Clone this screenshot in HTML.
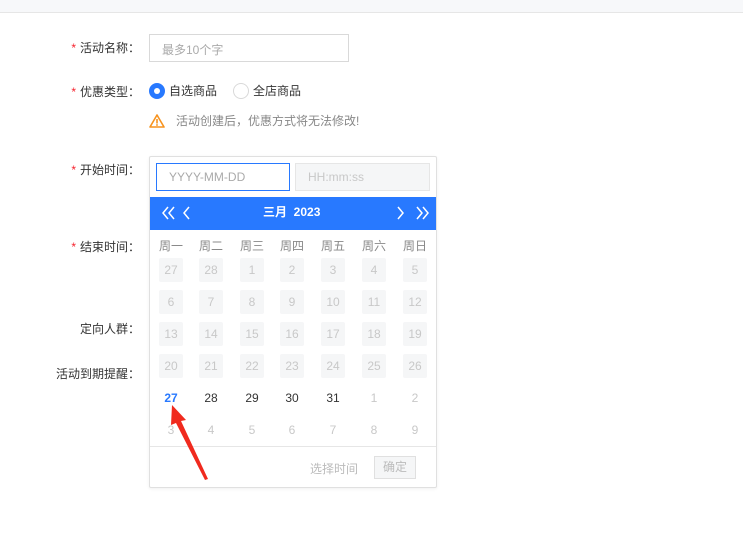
<!DOCTYPE html>
<html><head><meta charset="utf-8"><style>
*{margin:0;padding:0;box-sizing:border-box}
body{width:743px;height:544px;background:#fff;font-family:"Liberation Sans","Noto Sans CJK SC",sans-serif;position:relative;overflow:hidden;font-size:12px;color:#333}
.a{position:absolute}
.lbl{position:absolute;font-size:12px;color:#333;text-align:right;width:106px}
.lbl b{color:#f5222d;font-weight:normal;margin-right:4px}
.c{position:absolute;width:24px;height:24px;line-height:24px;text-align:center;font-size:12px;font-family:"Liberation Sans",sans-serif}
.g{background:#f5f6f7;color:#c8c8c8;border-radius:2px}
.w{position:absolute;top:237px;width:30px;text-align:center;color:#888;font-size:12px}
</style></head><body>
<div class="a" style="left:0;top:0;width:743px;height:13px;background:#f7f8fa;border-bottom:1px solid #e6e6e6"></div>
<div class="lbl" style="left:34px;top:39px"><b>*</b>活动名称：</div>
<div class="a" style="left:149px;top:34px;width:200px;height:28px;border:1px solid #d9d9d9;color:#aaa;padding:6px 12px">最多10个字</div>
<div class="lbl" style="left:34px;top:83px"><b>*</b>优惠类型：</div>
<div class="a" style="left:149px;top:83px;width:16px;height:16px;border-radius:50%;background:#2879ff"><div class="a" style="left:5px;top:5px;width:6px;height:6px;border-radius:50%;background:#fff"></div></div>
<div class="a" style="left:169px;top:82px">自选商品</div>
<div class="a" style="left:233px;top:83px;width:16px;height:16px;border-radius:50%;border:1px solid #d9d9d9"></div>
<div class="a" style="left:253px;top:82px">全店商品</div>
<svg class="a" style="left:149px;top:113px" width="16" height="16" viewBox="0 0 16 16"><path d="M8 2 L15 14 H1 Z" fill="none" stroke="#f7931e" stroke-width="1.6" stroke-linejoin="round"/><rect x="7.2" y="6" width="1.6" height="4.5" fill="#f7931e"/><rect x="7.2" y="11.2" width="1.6" height="1.6" fill="#f7931e"/></svg>
<div class="a" style="left:176px;top:112px;color:#888">活动创建后，优惠方式将无法修改!</div>
<div class="lbl" style="left:34px;top:161px"><b>*</b>开始时间：</div>
<div class="lbl" style="left:34px;top:238px"><b>*</b>结束时间：</div>
<div class="lbl" style="left:34px;top:320px">定向人群：</div>
<div class="lbl" style="left:34px;top:365px">活动到期提醒：</div>
<div class="a" style="left:149px;top:156px;width:288px;height:332px;border:1px solid #e0e0e0;border-radius:2px;background:#fff;box-shadow:0 1px 3px rgba(0,0,0,.06)"></div>
<div class="a" style="left:156px;top:163px;width:134px;height:28px;border:1px solid #2879ff;color:#aaa;padding:6px 12px;font-family:'Liberation Sans',sans-serif">YYYY-MM-DD</div>
<div class="a" style="left:295px;top:163px;width:135px;height:28px;border:1px solid #e6e6e6;background:#f5f6f7;color:#c8c8c8;padding:6px 12px;font-family:'Liberation Sans',sans-serif">HH:mm:ss</div>
<div class="a" style="left:150px;top:197px;width:286px;height:33px;background:#2879ff;color:#fff"></div>
<div class="a" style="left:263px;top:203px;color:#fff;font-weight:bold;font-size:12px">三月&nbsp; 2023</div>
<svg class="a" style="left:160px;top:205px" width="40" height="16" viewBox="0 0 40 16" fill="none" stroke="#fff" stroke-width="1.5"><path d="M8 2 L3 8 L8 14 M14 2 L9 8 L14 14 M29 2 L24 8 L29 14"/></svg>
<svg class="a" style="left:393px;top:205px" width="40" height="16" viewBox="0 0 40 16" fill="none" stroke="#fff" stroke-width="1.5"><path d="M5 2 L10 8 L5 14 M24 2 L29 8 L24 14 M30 2 L35 8 L30 14"/></svg>
<div class="w" style="left:156px">周一</div><div class="w" style="left:196px">周二</div><div class="w" style="left:237px">周三</div><div class="w" style="left:277px">周四</div><div class="w" style="left:318px">周五</div><div class="w" style="left:359px">周六</div><div class="w" style="left:400px">周日</div>
<div id="grid"></div>
<script>
var xs=[171,211,252,292,333,374,415],ys=[270,302,334,366,398,430];
var d=[[27,28,1,2,3,4,5],[6,7,8,9,10,11,12],[13,14,15,16,17,18,19],[20,21,22,23,24,25,26],[27,28,29,30,31,1,2],[3,4,5,6,7,8,9]];
var h='';
for(var r=0;r<6;r++)for(var c=0;c<7;c++){var cls='c',st='';
if(r<4)cls+=' g';else if(r==4&&c==0)st='color:#2879ff;font-weight:bold';else if(r==4&&c<5)st='color:#333';else st='color:#c8c8c8';
h+='<div class="'+cls+'" style="left:'+(xs[c]-12)+'px;top:'+(ys[r]-12)+'px;'+st+'">'+d[r][c]+'</div>';}
document.getElementById('grid').innerHTML=h;
</script>
<div class="a" style="left:150px;top:446px;width:286px;height:1px;background:#e6e6e6"></div>
<div class="a" style="left:310px;top:460px;color:#bbb">选择时间</div>
<div class="a" style="left:374px;top:456px;width:42px;height:23px;border:1px solid #e0e0e0;background:#f5f6f7;color:#bbb;text-align:center;line-height:21px">确定</div>
<svg class="a" style="left:0;top:0" width="743" height="544"><polygon points="172,405 186,420 181,421 208,479 205,480 176,423 171,425" fill="#f02a1e"/></svg>
</body></html>
